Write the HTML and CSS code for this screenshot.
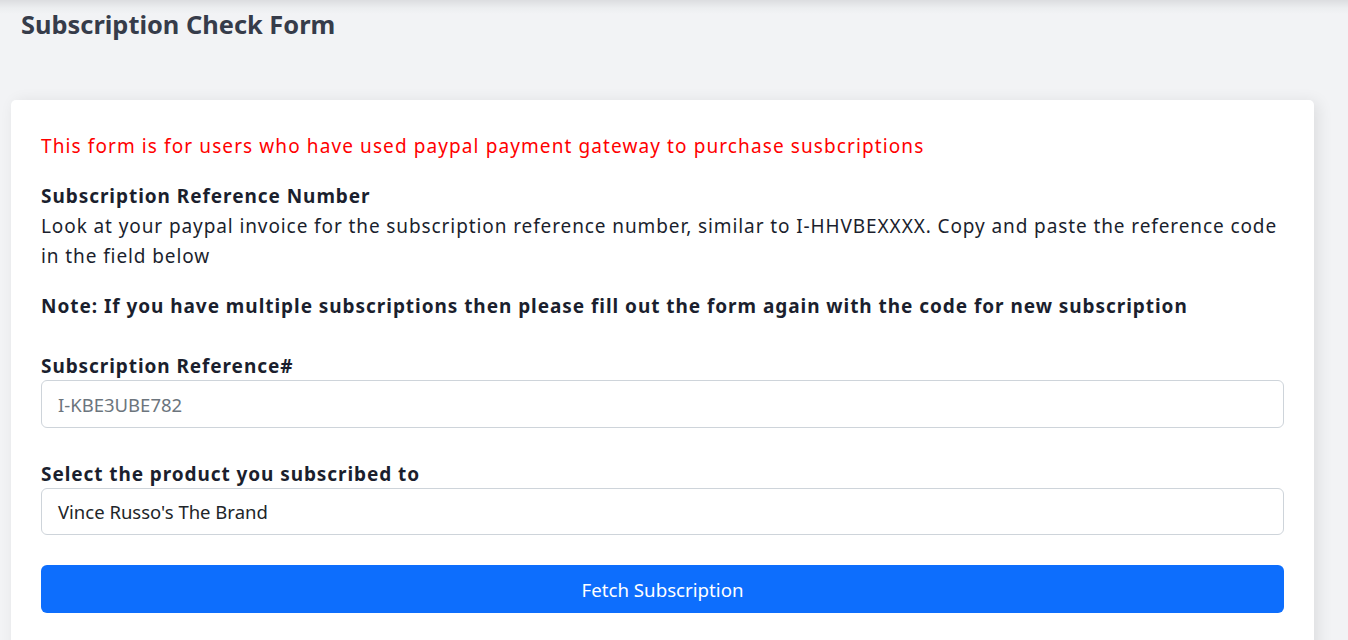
FILE: index.html
```html
<!DOCTYPE html>
<html lang="en">
<head>
<meta charset="utf-8">
<title>Subscription Check Form</title>
<link rel="stylesheet" href="styles.css">
</head>
<body>
<header class="topbar">
  <h1 class="title">Subscription Check Form</h1>
</header>
<main class="wrap">
  <section class="card">
    <p class="warn">This form is for users who have used paypal payment gateway to purchase susbcriptions</p>
    <div class="info">
      <h2 class="info-title">Subscription Reference Number</h2>
      <p class="info-text">Look at your paypal invoice for the subscription reference number, similar to I-HHVBEXXXX. Copy and paste the reference code in the field below</p>
    </div>
    <p class="note">Note: If you have multiple subscriptions then please fill out the form again with the code for new subscription</p>
    <form class="form">
      <div class="field">
        <label class="label" for="ref">Subscription Reference#</label>
        <input class="control input" id="ref" type="text" placeholder="I-KBE3UBE782">
      </div>
      <div class="field field-last">
        <label class="label" for="prod">Select the product you subscribed to</label>
        <div class="control select" id="prod">Vince Russo's The Brand</div>
      </div>
      <button class="btn" type="button">Fetch Subscription</button>
    </form>
  </section>
</main>
</body>
</html>
```
FILE: styles.css
```css
* { box-sizing: border-box; }
html, body { margin: 0; padding: 0; }
body {
  background: #f2f3f5;
  font-family: "Noto Sans", "Open Sans", sans-serif;
  color: #1b1f2e;
  height: 640px;
  overflow: hidden;
}
.topbar {
  background: linear-gradient(to bottom, #dcdde0 0px, #eceef0 8px, #f2f3f5 14px);
  padding: 8px 21px 0;
  height: 88px;
}
.title {
  margin: 0;
  font-size: 25.4px;
  font-weight: 700;
  color: #363c4a;
  line-height: 32px;
}
.wrap {
  padding: 12px 34px 0 11px;
}
.card {
  background: #fff;
  border-radius: 5px;
  box-shadow: 4px 2px 16px rgba(0,0,0,0.09);
  padding: 31px 30px 40px;
  min-height: 560px;
}
.warn {
  margin: 0 0 20px;
  color: #ff0000;
  font-size: 19px;
  letter-spacing: 1.1px;
  line-height: 30px;
}
.info-title {
  margin: 0;
  font-size: 19px;
  font-weight: 700;
  line-height: 30px;
  letter-spacing: 0.95px;
}
.info-text {
  margin: 0;
  font-size: 19px;
  line-height: 30px;
  letter-spacing: 0.9px;
}
.note {
  margin: 20px 0 0;
  font-size: 19px;
  font-weight: 700;
  line-height: 30px;
  letter-spacing: 0.95px;
}
.form {
  margin-top: 30px;
}
.field {
  margin-bottom: 31px;
}
.field-last {
  margin-bottom: 30px;
}
.label {
  display: block;
  font-size: 19px;
  font-weight: 700;
  line-height: 30px;
  letter-spacing: 0.92px;
  margin-bottom: -1px;
}
.control {
  display: block;
  width: 100%;
  height: 47px;
  border: 1px solid #ced4da;
  border-radius: 6px;
  padding: 0 16px;
  font-family: inherit;
  font-size: 18.5px;
  color: #212529;
  background: #fff;
  line-height: 45px;
}
.input {
  height: 48px;
}
.control::placeholder { color: #6c757d; }
.btn {
  display: block;
  width: 100%;
  height: 48px;
  border: 0;
  border-radius: 6px;
  background: #0d6efd;
  color: #fff;
  font-family: inherit;
  font-size: 18.7px;
}
```
